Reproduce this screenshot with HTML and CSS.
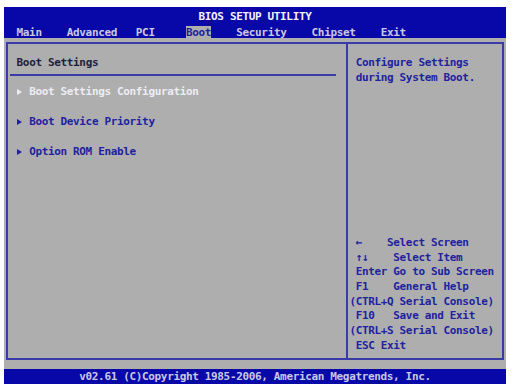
FILE: index.html
```html
<!DOCTYPE html>
<html lang="en">
<head>
    <meta charset="UTF-8">
    <meta name="viewport" content="width=device-width, initial-scale=1.0">
    <title>BIOS Setup Utility</title>
    <link rel="stylesheet" href="styles.css">
</head>
<body>

    <div class="screen">

        <header class="top">
            <div class="title">BIOS SETUP UTILITY</div>
            <nav class="tabs">  <span class="tab">Main</span>    <span class="tab">Advanced</span>   <span class="tab">PCI</span>     <span class="tab active">Boot</span>    <span class="tab">Security</span>    <span class="tab">Chipset</span>    <span class="tab">Exit</span></nav>
        </header>

        <main class="body">
            <div class="frame">

                <section class="panel">
                    <div class="heading">Boot Settings</div>
                    <div class="rule"></div>
                    <ul class="items">
                        <li class="item selected"><span class="arrow"></span>Boot Settings Configuration</li>
                        <li class="item"><span class="arrow"></span>Boot Device Priority</li>
                        <li class="item"><span class="arrow"></span>Option ROM Enable</li>
                    </ul>
                </section>

                <aside class="side">
                    <div class="desc">
                        <div class="line"> Configure Settings</div>
                        <div class="line"> during System Boot.</div>
                    </div>
                    <div class="help">
                        <div class="line"> ←    Select Screen</div>
                        <div class="line"> ↑↓    Select Item</div>
                        <div class="line"> Enter Go to Sub Screen</div>
                        <div class="line"> F1    General Help</div>
                        <div class="line">(CTRL+Q Serial Console)</div>
                        <div class="line"> F10   Save and Exit</div>
                        <div class="line">(CTRL+S Serial Console)</div>
                        <div class="line"> ESC Exit</div>
                    </div>
                </aside>

            </div>
        </main>

        <footer class="foot">v02.61 (C)Copyright 1985-2006, American Megatrends, Inc.</footer>

    </div>

</body>
</html>
```

FILE: styles.css
```css
/* --- Base --- */
:root {
    --blue: #0808a8;
    --gray: #aeaeae;
    --line: #3a3aa8;
    --ink: #2222a0;
    --light: #c8c8e4;
    --col: 6.275px;
}

html, body {
    margin: 0;
    padding: 0;
    background-color: #ffffff;
}

body {
    font-family: 'DejaVu Sans Mono', 'Liberation Mono', monospace;
    font-size: 11px;
    letter-spacing: -0.347px;
    font-weight: 700;
}

/* --- Screen --- */
.screen {
    width: 502px;
    height: 377px;
    margin: 7px 0 0 4px;
    background-color: var(--gray);
    display: flex;
    flex-direction: column;
}

/* --- Header --- */
.top {
    background-color: var(--blue);
    height: 31px;
    padding-top: 2px;
    box-sizing: border-box;
}
.title {
    text-align: center;
    line-height: 15px;
    color: #f2f2f6;
}
.tabs {
    white-space: pre;
    height: 14px;
    line-height: 18px;
    color: var(--light);
}
.tab.active {
    background-color: var(--gray);
    color: var(--ink);
}

/* --- Body & frame --- */
.body {
    flex: 1;
    padding: 4px 2px 9px 2px;
    display: flex;
}
.frame {
    flex: 1;
    display: flex;
    border: 2px solid var(--line);
}

.panel {
    width: 340px;
    box-sizing: border-box;
    border-right: 2px solid var(--line);
    padding-top: 10.7px;
}
.heading {
    line-height: 15px;
    padding-left: 8.6px;
    color: #1e1e3c;
}
.rule {
    height: 2px;
    width: 326px;
    margin: 4.3px 0 0 2.3px;
    background-color: var(--line);
}

.items {
    list-style: none;
    margin: 8.2px 0 0 0;
    padding: 0 0 0 8.6px;
}
.item {
    display: flex;
    align-items: center;
    line-height: 15px;
    margin-bottom: 15px;
    color: var(--ink);
}
.item.selected { color: #ececf2; }
.arrow {
    width: calc(var(--col) * 2);
    height: 15px;
    position: relative;
}
.arrow::before {
    content: "";
    position: absolute;
    left: 0.5px;
    top: 4.5px;
    border-left: 5px solid currentColor;
    border-top: 3px solid transparent;
    border-bottom: 3px solid transparent;
}

/* --- Side help --- */
.side {
    flex: 1;
    display: flex;
    flex-direction: column;
    justify-content: space-between;
    padding: 10.7px 0 4.5px 1.4px;
    color: var(--ink);
}
.line { white-space: pre; }
.desc { line-height: 15px; }
.help { line-height: 14.7px; }

/* --- Footer --- */
.foot {
    background-color: var(--blue);
    height: 15px;
    line-height: 15px;
    text-align: center;
    color: var(--light);
}
```
